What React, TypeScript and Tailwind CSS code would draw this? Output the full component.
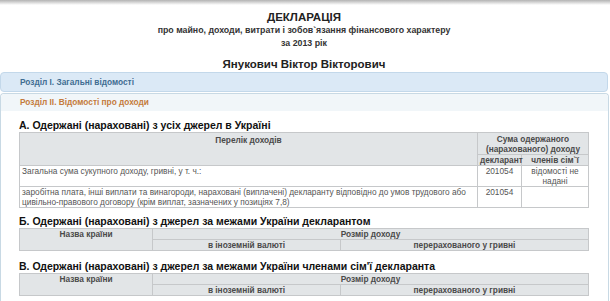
import React from "react";

const cell = "border border-[#c6c8ca] px-[2px] align-top";
const head = `${cell} bg-[#e2e5e7] font-bold text-[#4a4a4a] text-center`;

const ForeignIncomeTable: React.FC = () => (
  <table className="w-[570px] table-fixed border-collapse text-[8.3px] leading-[10px]">
    <colgroup>
      <col className="w-[133px]" />
      <col className="w-[188px]" />
      <col />
    </colgroup>
    <tbody>
      <tr className="h-[11px]">
        <td rowSpan={2} className={head}>
          Назва країни
        </td>
        <td colSpan={2} className={head}>
          Розмір доходу
        </td>
      </tr>
      <tr className="h-[11px]">
        <td className={head}>в іноземній валюті</td>
        <td className={head}>перерахованого у гривні</td>
      </tr>
    </tbody>
  </table>
);

const App: React.FC = () => {
  return (
    <div
      className="w-[610px] h-[301px] overflow-hidden bg-white text-[#222]"
      style={{ fontFamily: '"Liberation Sans", Arial, sans-serif' }}
    >
      {/* top edge shadow */}
      <div className="h-[5px] bg-gradient-to-b from-[#b3b3b3] to-white" />

      {/* declaration title */}
      <div className="w-[608px] text-center">
        <div className="mt-[6px] text-[11.5px] leading-[13px] font-bold text-[#222]">ДЕКЛАРАЦІЯ</div>
        <div className="text-[8.8px] leading-[12px] font-bold text-[#333]">
          про майно, доходи, витрати і зобов`язання фінансового характеру
        </div>
        <div className="mt-[1px] text-[8.8px] leading-[12px] font-bold text-[#333]">за 2013 рік</div>
        <div className="mt-[7px] text-[11.5px] leading-[16px] font-bold text-[#222]">
          Янукович Віктор Вікторович
        </div>
      </div>

      {/* section I */}
      <div className="w-[608px] h-[20px] flex items-center rounded-[4px] border border-[#c3d8ea] bg-[#dbe9f6] pl-[19px]">
        <span className="text-[8.3px] font-bold text-[#3f6d92]">Розділ I. Загальні відомості</span>
      </div>

      {/* section II */}
      <div className="mt-[1px] w-[609px] h-[220px] rounded-t-[4px] border border-b-0 border-[#c8d9e4]">
        <div className="h-[17px] flex items-center bg-[#f1f6f9] pl-[19px] rounded-t-[4px]">
          <span className="text-[8.3px] font-bold text-[#c47b3c]">Розділ II. Відомості про доходи</span>
        </div>

        <div className="pl-[18px]">
          <div className="mt-[8px] text-[10.5px] leading-[13px] font-bold text-[#111]">
            А. Одержані (нараховані) з усіх джерел в Україні
          </div>
          <table className="w-[570px] table-fixed border-collapse text-[8.3px] leading-[10px]">
            <colgroup>
              <col />
              <col className="w-[44px]" />
              <col className="w-[67px]" />
            </colgroup>
            <tbody>
              <tr className="h-[21px]">
                <td rowSpan={2} className={`${head} pt-[2px]`}>
                  Перелік доходів
                </td>
                <td colSpan={2} className={`${head} pt-[1px]`}>
                  Сума одержаного
                  <br />
                  (нарахованого) доходу
                </td>
              </tr>
              <tr className="h-[11px]">
                <td className={`${head} px-0`}>декларант</td>
                <td className={head}>членів сім`ї</td>
              </tr>
              <tr className="h-[20px] text-[#555]">
                <td className={cell}>Загальна сума сукупного доходу, гривні, у т. ч.:</td>
                <td className={`${cell} text-center`}>201054</td>
                <td className={`${cell} text-center`}>
                  відомості не
                  <br />
                  надані
                </td>
              </tr>
              <tr className="h-[20px] text-[#555]">
                <td className={cell}>
                  заробітна плата, інші виплати та винагороди, нараховані (виплачені) декларанту відповідно до умов
                  трудового або цивільно-правового договору (крім виплат, зазначених у позиціях 7,8)
                </td>
                <td className={`${cell} text-center`}>201054</td>
                <td className={cell}></td>
              </tr>
            </tbody>
          </table>

          <div className="mt-[7px] text-[10.5px] leading-[13px] font-bold text-[#111]">
            Б. Одержані (нараховані) з джерел за межами України декларантом
          </div>
          <ForeignIncomeTable />

          <div className="mt-[9px] text-[10.5px] leading-[13px] font-bold text-[#111]">
            В. Одержані (нараховані) з джерел за межами України членами сім'ї декларанта
          </div>
          <ForeignIncomeTable />
        </div>
      </div>
    </div>
  );
};

export default App;
